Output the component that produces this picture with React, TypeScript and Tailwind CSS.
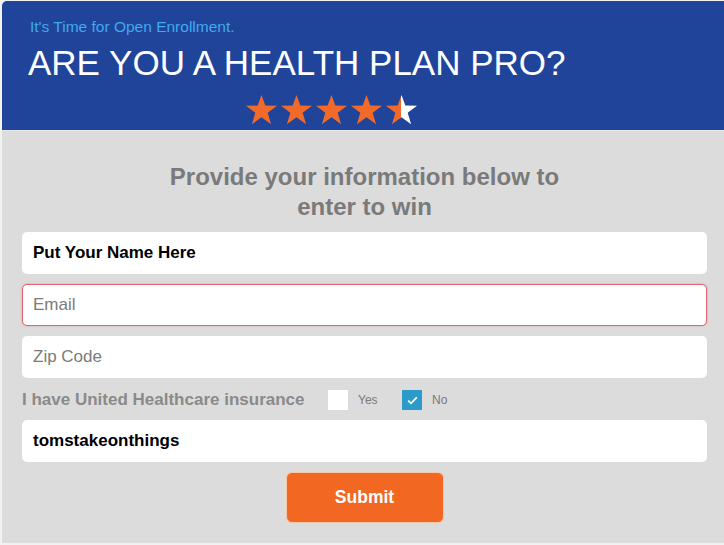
import React from "react";

const Star = ({ half = false, id }: { half?: boolean; id: string }) => (
  <svg width="33" height="32" viewBox="0 0 24 23" className="block">
    {half && (
      <defs>
        <linearGradient id={id} x1="0" x2="1" y1="0" y2="0">
          <stop offset="50%" stopColor="#f26a2a" />
          <stop offset="50%" stopColor="#ffffff" />
        </linearGradient>
      </defs>
    )}
    <polygon
      points="12,0.5 14.8,8.3 23.3,8.4 16.5,13.5 19,21.8 12,16.8 5,21.8 7.5,13.5 0.7,8.4 9.2,8.3"
      fill={half ? `url(#${id})` : "#f26a2a"}
    />
  </svg>
);

export default function App() {
  const font = { fontFamily: '"Liberation Sans", Arial, sans-serif' };
  return (
    <div className="w-[724px] h-[545px] bg-[#f2f2f2] overflow-hidden" style={font}>
      <div className="ml-[2px] mt-[1px] w-[722px] h-[542px] rounded-tl-[5px] overflow-hidden bg-[#dcdcdc] flex flex-col">
        <div className="bg-[#1f449a] h-[129px] pt-[16px] pl-[26px]">
          <div className="text-[15.5px] leading-[20px] text-[#41a9ee] pl-[2px]">It's Time for Open Enrollment.</div>
          <div className="mt-[6px] text-[35px] leading-[40px] text-white font-light tracking-[0px]">
            ARE YOU A HEALTH PLAN PRO?
          </div>
          <div className="mt-[11px] ml-[217px] flex gap-[2px]">
            <Star id="s1" />
            <Star id="s2" />
            <Star id="s3" />
            <Star id="s4" />
            <Star id="s5" half />
          </div>
        </div>
        <div className="h-[1px] bg-[#e6e6e6]" />
        <div className="pt-[31px] pl-[20px] pr-[17px] flex flex-col">
          <div className="text-center text-[24px] leading-[30px] font-bold text-[#7a7a7a]">
            Provide your information below to
            <br />
            enter to win
          </div>
          <div className="mt-[10px] flex flex-col gap-[10px]">
            <div className="h-[42px] bg-white rounded-[5px] flex items-center pl-[11px] text-[17px] font-bold text-black">
              Put Your Name Here
            </div>
            <div className="h-[42px] bg-white rounded-[5px] flex items-center pl-[10px] text-[17px] text-[#7b7b7b] border-[1.5px] border-[#e2646c] shadow-[0_0_2px_rgba(226,100,108,0.6)]">
              Email
            </div>
            <div className="h-[42px] bg-white rounded-[5px] flex items-center pl-[11px] text-[17px] text-[#7b7b7b]">
              Zip Code
            </div>
            <div className="h-[22px] flex items-center pt-[2px]">
              <span className="text-[17px] font-bold text-[#8a8a8a] w-[306px]">I have United Healthcare insurance</span>
              <span className="w-[20px] h-[20px] bg-white" />
              <span className="ml-[10px] w-[44px] text-[12px] text-[#7a7a7a]">Yes</span>
              <span className="w-[20px] h-[20px] bg-[#2b9cc9] flex items-center justify-center">
                <svg width="11" height="9" viewBox="0 0 11 9">
                  <path d="M1.2 4.6 L4 7.3 L9.8 1.3" stroke="white" strokeWidth="1.8" fill="none" />
                </svg>
              </span>
              <span className="ml-[10px] text-[12px] text-[#7a7a7a]">No</span>
            </div>
            <div className="h-[42px] bg-white rounded-[5px] flex items-center pl-[11px] text-[17px] font-bold text-black">
              tomstakeonthings
            </div>
            <div className="flex justify-center">
              <button className="w-[158px] h-[51px] rounded-[6px] bg-[#f26722] border border-[#f7c9a8] text-white text-[17.5px] font-bold">
                Submit
              </button>
            </div>
          </div>
        </div>
      </div>
    </div>
  );
}
